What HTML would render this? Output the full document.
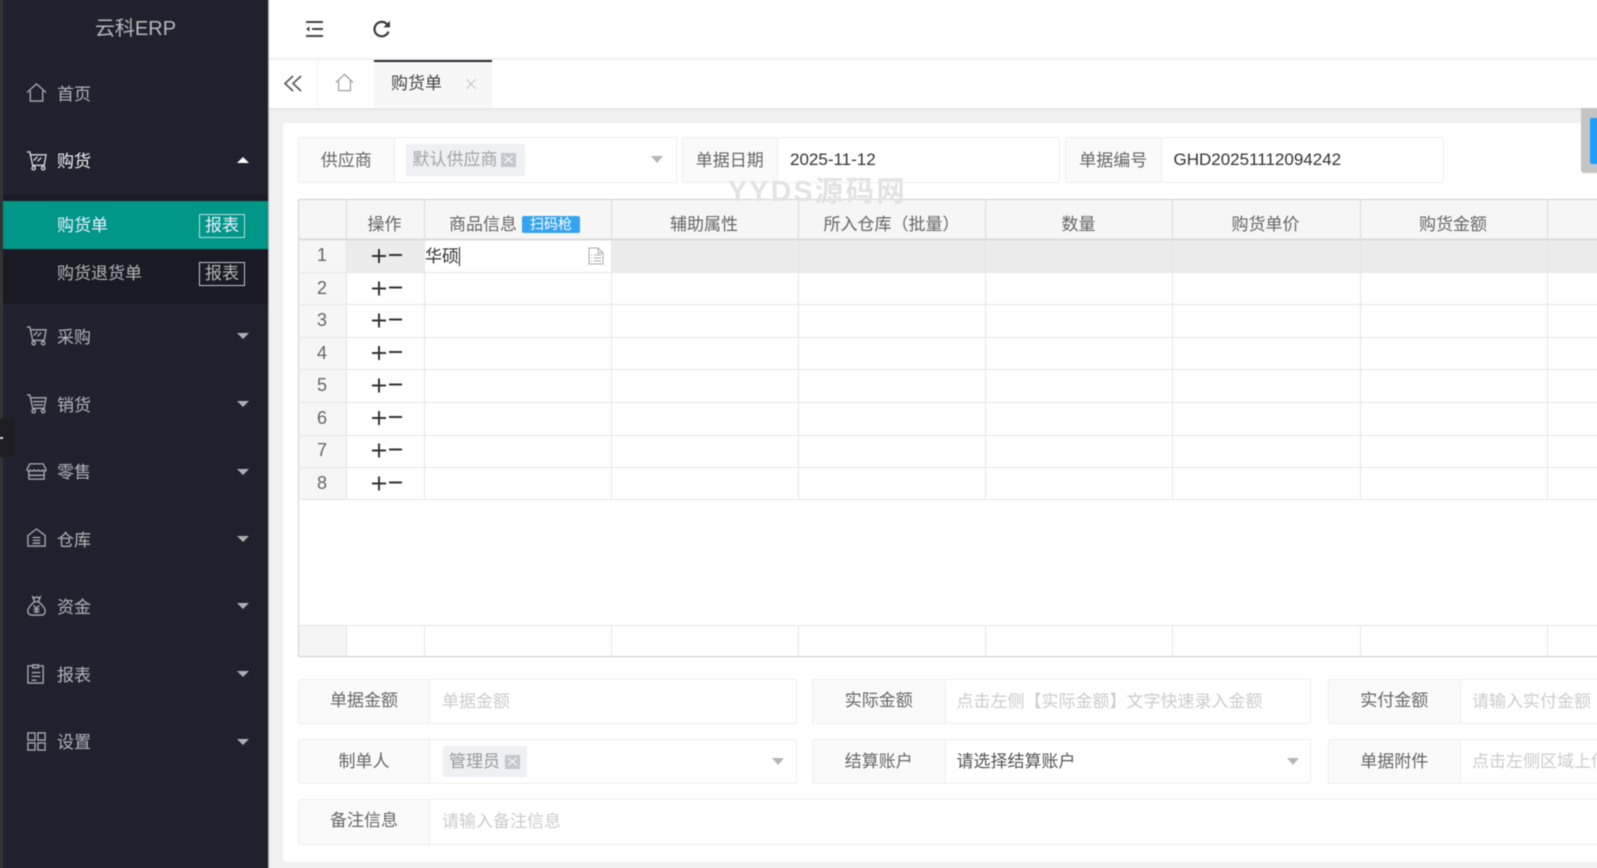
<!DOCTYPE html>
<html lang="zh-CN"><head><meta charset="utf-8"><title>购货单</title>
<style>
*{box-sizing:border-box}
html,body{margin:0;padding:0;width:1597px;height:868px;overflow:hidden;background:#f0f0f0}
body{position:relative;font-family:"Liberation Sans","Noto Sans CJK SC",sans-serif;font-size:17px;color:#666}
#wrap{position:absolute;left:-10px;top:-10px;width:1617px;height:888px;overflow:hidden;filter:blur(.45px);background:#f0f0f0}
#root{position:absolute;left:10px;top:10px;width:1597px;height:868px}
.a{position:absolute}
.t{position:absolute;white-space:nowrap;display:block}
.c{text-align:center}
.m{position:absolute;left:57px;width:60px;height:24px;line-height:24px;color:#b4b5b9;font-size:17px;white-space:nowrap}
.i{position:absolute;left:26px;width:21px;height:21px;fill:none;stroke:#a9aaae;stroke-width:1.4}
.dn,.up{position:absolute;left:237px;width:0;height:0;border-left:6.5px solid transparent;border-right:6.5px solid transparent}
.dn{border-top:6.5px solid #aeafb3}
.up{border-bottom:6.5px solid #fff}
.box{position:absolute;background:#fff;border:1px solid #eee;border-radius:2px}
.lb{position:absolute;left:0;top:0;bottom:0;background:#fafafa;border-right:1px solid #eee;text-align:center;color:#666;white-space:nowrap}
.val{position:absolute;white-space:nowrap}
.ph{color:#ccc}
.tag{position:absolute;background:#eef0f3;border-radius:2px;color:#a3a3a3;white-space:nowrap}
.x{position:absolute;background:#c3c7ce;width:15px;height:14px}
.x:before,.x:after{content:"";position:absolute;left:2px;top:6.5px;width:11px;height:1.2px;background:#fff}
.x:before{transform:rotate(40deg)}.x:after{transform:rotate(-40deg)}
.car{position:absolute;width:0;height:0;border-left:6.5px solid transparent;border-right:6.5px solid transparent;border-top:7px solid #b5b5b5}
.th{position:absolute;top:205px;height:40px;line-height:40px;text-align:center;color:#666;white-space:nowrap}
.n{position:absolute;left:298.500px;width:47px;text-align:center;color:#666;font-size:18px;height:32px;line-height:32px}
</style></head><body><div id="wrap"><div id="root">

<!-- left edge + sidebar -->
<div class="a" style="left:-10px;top:-10px;width:13px;height:888px;background:#333"></div>
<div class="a" style="left:3px;top:-10px;width:265px;height:888px;background:#1f222d"></div>
<div class="a" style="left:268px;top:-10px;width:1px;height:888px;background:#a9abb0"></div>
<div class="a" style="left:-10px;top:419px;width:25px;height:38px;background:#1d1e22"></div>
<div class="a" style="left:0;top:437px;width:3px;height:2px;background:#ddd"></div>

<span class="t c" style="left:3px;top:15px;width:265px;height:28px;line-height:28px;font-size:20px;color:#b7b8ba">云科ERP</span>

<svg class="i" style="top:82px" viewBox="0 0 22 22"><path d="M1 11 11 2l10 9M4.500 9v11h13V9"/></svg>
<span class="m" style="top:82.500px">首页</span>

<svg class="i" style="top:150px;stroke:#d6d6d8" viewBox="0 0 22 22"><path d="M1 2h3l3 14h12l2-11H5M8 11l4-4M12 12l4-4"/><circle cx="8" cy="19" r="1.800"/><circle cx="18" cy="19" r="1.800"/></svg>
<span class="m" style="top:150px;color:#f2f2f2">购货</span>
<div class="up" style="top:157px"></div>

<div class="a" style="left:3px;top:195px;width:265px;height:109px;background:#191a23"></div>
<div class="a" style="left:3px;top:201px;width:265px;height:48px;background:#009688"></div>
<span class="m" style="top:214px;width:100px;color:#eef">购货单</span>
<div class="a" style="left:199px;top:214px;width:46px;height:24px;border:1px solid #b5e0db;color:#eef;text-align:center;line-height:21px">报表</div>
<span class="m" style="top:262px;width:100px">购货退货单</span>
<div class="a" style="left:199px;top:262px;width:46px;height:24px;border:1px solid #c4c4c6;color:#b4b5b9;text-align:center;line-height:21px">报表</div>

<svg class="i" style="top:325px" viewBox="0 0 22 22"><path d="M1 2h3l3 14h12l2-11H5M8 11l4-4M12 12l4-4"/><circle cx="8" cy="19" r="1.800"/><circle cx="18" cy="19" r="1.800"/></svg>
<span class="m" style="top:325.500px">采购</span><div class="dn" style="top:333px"></div>

<svg class="i" style="top:393px" viewBox="0 0 22 22"><path d="M1 2h3l3 14h12l2-11H5M7 9h12M8 12.500h10"/><circle cx="8" cy="19" r="1.800"/><circle cx="18" cy="19" r="1.800"/></svg>
<span class="m" style="top:393.500px">销货</span><div class="dn" style="top:401px"></div>

<svg class="i" style="top:461px" viewBox="0 0 22 22"><path d="M4 3h14l3 6c0 2-3 2-3.500 0-.5 2-4 2-4.500 0-.5 2-4 2-4.500 0-.5 2-4 2-4.500 0C4 11 1 11 1 9zM3 11v8h16v-8M3 15h16"/></svg>
<span class="m" style="top:461px">零售</span><div class="dn" style="top:469px"></div>

<svg class="i" style="top:527px" viewBox="0 0 22 22"><path d="M2 9 11 2l9 7v11H2zM7 11h8M7 14h8M7 17h8"/></svg>
<span class="m" style="top:528.500px">仓库</span><div class="dn" style="top:536px"></div>

<svg class="i" style="top:595px" viewBox="0 0 22 22"><path d="M7 2l2 1 2-1 2 1 2-1-2 5H9zM9 7C5 10 1 15 2 18c.5 2 2 3 4 3h10c2 0 3.500-1 4-3 1-3-3-8-7-11M8 11l3 3 3-3M11 14v5M8 15h6M8 17.500h6"/></svg>
<span class="m" style="top:596px">资金</span><div class="dn" style="top:603px"></div>

<svg class="i" style="top:663px" viewBox="0 0 22 22"><path d="M7 3H2v18h16V3h-5M7 5V2h6v3zM6 10h9M6 14h9M6 18h5"/></svg>
<span class="m" style="top:664px">报表</span><div class="dn" style="top:671px"></div>

<svg class="i" style="top:731px" viewBox="0 0 22 22"><path d="M2 2h7.500v7.500H2zM12.500 2H20v7.500h-7.500zM2 12.500h7.500V20H2zM12.500 12.500H20V20h-7.500z"/></svg>
<span class="m" style="top:731px">设置</span><div class="dn" style="top:739px"></div>

<!-- top bar -->
<div class="a" style="left:269px;top:-10px;width:1338px;height:69px;background:#fff;border-bottom:1px solid #f0f0f0"></div>
<svg class="a" style="left:304px;top:19px" width="20" height="20" viewBox="0 0 20 20" fill="none" stroke="#444" stroke-width="2"><path d="M2 3h17M8 10h11M2 17h17"/><path d="M5.500 7.500v5L2 10z" fill="#444" stroke="none"/></svg>
<svg class="a" style="left:372px;top:19px" width="20" height="20" viewBox="0 0 20 20" fill="none" stroke="#3a3a3a" stroke-width="2.200"><path d="M16.500 12.500a7.200 7.200 0 1 1-1.500-7.300l2 2"/><path d="M18 1.800v6.600h-6.600z" fill="#3a3a3a" stroke="none"/></svg>

<!-- tab bar -->
<div class="a" style="left:269px;top:60px;width:1338px;height:50px;background:#fff;border-bottom:2px solid #e6e6e6"></div>
<div class="a" style="left:317px;top:60px;width:1px;height:48px;background:#f2f2f2"></div>
<svg class="a" style="left:283px;top:74px" width="20" height="19" viewBox="0 0 20 19" fill="none" stroke="#555" stroke-width="1.600"><path d="M10 2 2 9.500 10 17M18 2l-8 7.500 8 7.500"/></svg>
<svg class="a" style="left:335px;top:73px" width="19" height="19" viewBox="0 0 21 20" fill="none" stroke="#8a8a8a" stroke-width="1.100"><path d="M1 10 10.500 1 20 10M4 8v11h13V8"/></svg>
<div class="a" style="left:373.500px;top:60px;width:118px;height:48px;background:#f7f7f7;border-top:2px solid #23262e"></div>
<span class="t" style="left:391px;top:72px;height:24px;line-height:24px;color:#444">购货单</span>
<svg class="a" style="left:466px;top:79px" width="10" height="10" viewBox="0 0 10 10" stroke="#c8c8c8" stroke-width="1.100"><path d="M.5.500l9 9M9.500.500l-9 9"/></svg>

<!-- card -->
<div class="a" style="left:283px;top:123px;width:1324px;height:739px;background:#fff;border-radius:3px 0 0 3px"></div>

<!-- row 1 form -->
<div class="box" style="left:298px;top:137px;width:379px;height:46px"><div class="lb" style="width:95.500px;line-height:45px">供应商</div></div>
<div class="tag" style="left:405.500px;top:144px;width:119px;height:32px;line-height:31px;padding-left:7px">默认供应商</div>
<div class="x" style="left:501px;top:152.500px"></div>
<div class="car" style="left:651px;top:156px"></div>

<div class="box" style="left:682px;top:137px;width:378px;height:46px"><div class="lb" style="width:94.500px;line-height:45px">单据日期</div></div>
<span class="val" style="left:790px;top:147.500px;height:24px;line-height:24px;color:#333;font-size:17px">2025-11-12</span>

<div class="box" style="left:1065px;top:137px;width:379px;height:46px"><div class="lb" style="width:95.500px;line-height:45px">单据编号</div></div>
<span class="val" style="left:1173.500px;top:147.500px;height:24px;line-height:24px;color:#333;font-size:17px">GHD20251112094242</span>

<!-- table -->
<svg class="a" style="left:297px;top:198px" width="1310" height="460" viewBox="297 198 1310 460" shape-rendering="crispEdges">
<rect x="298" y="200" width="1309" height="39" fill="#f6f6f6"/>
<rect x="298" y="239" width="48" height="261" fill="#f6f6f6"/>
<rect x="346" y="239" width="1261" height="33" fill="#ececec"/>
<rect x="425" y="239" width="187" height="33" fill="#fff"/>
<rect x="298" y="626" width="48" height="30" fill="#f5f5f5"/>
<g stroke="#cfcfcf"><path d="M298.500 199.500H1607M298.500 199.500V656M298 656.500H1607"/></g>
<path d="M298 239.500H1607" stroke="#dcdcdc" stroke-width="2"/>
<g stroke="#dadada"><path d="M346.500 200V239M424.500 200V239M611.500 200V239M798.500 200V239M985.500 200V239M1172.500 200V239M1360.500 200V239M1547.500 200V239"/></g>
<g stroke="#e6e6e6"><path d="M298 272.500H1607M298 304.500H1607M298 337.500H1607M298 369.500H1607M298 402.500H1607M298 435.500H1607M298 467.500H1607M298 499.500H1607M298 625.500H1607"/>
<path d="M346.500 240V500M424.500 240V500M611.500 240V500M798.500 240V500M985.500 240V500M1172.500 240V500M1360.500 240V500M1547.500 240V500"/>
<path d="M346.500 626V656M424.500 626V656M611.500 626V656M798.500 626V656M985.500 626V656M1172.500 626V656M1360.500 626V656M1547.500 626V656"/></g>
</svg>

<span class="th" style="left:346px;width:77px">操作</span>
<span class="th" style="left:448px;width:70px">商品信息</span>
<div class="a" style="left:522px;top:216px;width:58px;height:17px;line-height:17px;background:#35a4f0;border-radius:2px;color:#fff;text-align:center;font-size:14px">扫码枪</div>
<span class="th" style="left:611px;width:186px">辅助属性</span>
<span class="th" style="left:798px;width:187px">所入仓库（批量）</span>
<span class="th" style="left:986px;width:185px">数量</span>
<span class="th" style="left:1172px;width:187px">购货单价</span>
<span class="th" style="left:1360px;width:186px">购货金额</span>

<span class="n" style="top:239px">1</span>
<span class="n" style="top:272px">2</span>
<span class="n" style="top:304px">3</span>
<span class="n" style="top:337px">4</span>
<span class="n" style="top:369px">5</span>
<span class="n" style="top:402px">6</span>
<span class="n" style="top:434px">7</span>
<span class="n" style="top:467px">8</span>

<svg class="a" style="left:370px;top:245px" width="34" height="250" viewBox="0 0 34 250" fill="none" stroke="#333" stroke-width="2">
<path d="M2 11H16M9 4V18M19 10H32"/>
<path transform="translate(0,32.500)" d="M2 11H16M9 4V18M19 10H32"/>
<path transform="translate(0,64.500)" d="M2 11H16M9 4V18M19 10H32"/>
<path transform="translate(0,97)" d="M2 11H16M9 4V18M19 10H32"/>
<path transform="translate(0,129.500)" d="M2 11H16M9 4V18M19 10H32"/>
<path transform="translate(0,162)" d="M2 11H16M9 4V18M19 10H32"/>
<path transform="translate(0,194.500)" d="M2 11H16M9 4V18M19 10H32"/>
<path transform="translate(0,227.500)" d="M2 11H16M9 4V18M19 10H32"/>
</svg>

<span class="t" style="left:425px;top:245px;height:24px;line-height:24px;color:#333">华硕</span>
<div class="a" style="left:458.500px;top:247px;width:1px;height:19px;background:#222"></div>
<svg class="a" style="left:588px;top:247px" width="16" height="18" viewBox="0 0 16 18" fill="none" stroke="#aaa" stroke-width="1"><path d="M1 1h9l5 5v11H1zM10 1v5h5M6 8h7M6 11h7M6 14h7M3 8h1M3 11h1M3 14h1"/></svg>

<!-- watermark -->
<span class="t" style="left:728px;top:173.500px;height:36px;line-height:36px;font-size:28.500px;font-weight:700;letter-spacing:2.300px;color:#e3e3e5">YYDS源码网</span>

<!-- bottom forms -->
<div class="box" style="left:298px;top:678.500px;width:499px;height:45.500px"><div class="lb" style="width:131px;line-height:42px">单据金额</div></div>
<span class="val ph" style="left:442px;top:690px;height:24px;line-height:24px">单据金额</span>
<div class="box" style="left:812px;top:678.500px;width:499px;height:45.500px"><div class="lb" style="width:132.500px;line-height:42px">实际金额</div></div>
<span class="val ph" style="left:956.500px;top:690px;height:24px;line-height:24px">点击左侧【实际金额】文字快速录入金额</span>
<div class="box" style="left:1328px;top:678.500px;width:290px;height:45.500px"><div class="lb" style="width:131.500px;line-height:42px">实付金额</div></div>
<span class="val ph" style="left:1472px;top:690px;height:24px;line-height:24px">请输入实付金额</span>

<div class="box" style="left:298px;top:739px;width:499px;height:45px"><div class="lb" style="width:131px;line-height:43px">制单人</div></div>
<div class="tag" style="left:443px;top:746px;width:84px;height:31px;line-height:31px;padding-left:6px;color:#999">管理员</div>
<div class="x" style="left:504.500px;top:754.500px"></div>
<div class="car" style="left:771.500px;top:758px"></div>
<div class="box" style="left:812px;top:739px;width:499px;height:45px"><div class="lb" style="width:132.500px;line-height:43px">结算账户</div></div>
<span class="val" style="left:956.500px;top:750px;height:24px;line-height:24px;color:#555">请选择结算账户</span>
<div class="car" style="left:1287px;top:758px"></div>
<div class="box" style="left:1328px;top:739px;width:290px;height:45px"><div class="lb" style="width:131.500px;line-height:43px">单据附件</div></div>
<span class="val ph" style="left:1472px;top:750px;height:24px;line-height:24px">点击左侧区域上传</span>

<div class="box" style="left:298px;top:799px;width:1320px;height:46px"><div class="lb" style="width:131px;line-height:42px">备注信息</div></div>
<span class="val ph" style="left:442px;top:810px;height:24px;line-height:24px">请输入备注信息</span>

<!-- right overlay -->
<div class="a" style="left:1581px;top:108px;width:26px;height:65px;background:#c4c4c4;border-radius:0 0 0 3px"></div>
<div class="a" style="left:1590px;top:118px;width:17px;height:46px;background:#1e9fff;border-radius:2px 0 0 2px"></div>

</div></div></body></html>
